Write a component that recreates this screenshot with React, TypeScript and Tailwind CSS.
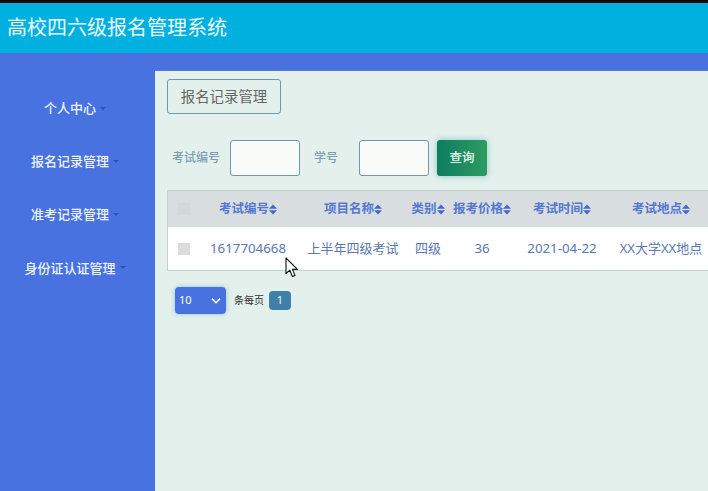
import { ChevronDown } from "lucide-react";

const menus = ["个人中心", "报名记录管理", "准考记录管理", "身份证认证管理"];

const columns = [
  { label: "考试编号", value: "1617704668", width: "w-[96px]", size: "text-[13.3px]" },
  { label: "项目名称", value: "上半年四级考试", width: "w-[114px]", size: "text-[13px]" },
  { label: "类别", value: "四级", width: "w-[36px]", size: "text-[13px]" },
  { label: "报考价格", value: "36", width: "w-[72px]", size: "text-[13.3px]" },
  { label: "考试时间", value: "2021-04-22", width: "w-[88px]", size: "text-[13.3px]" },
  { label: "考试地点", value: "XX大学XX地点", width: "w-[110px]", size: "text-[13px]" },
];

const fontStack = "font-['Noto_Sans','Noto_Sans_CJK_SC',sans-serif]";

const SortIcon = () => (
  <svg width="8" height="11" viewBox="0 0 8 11" className="shrink-0 text-[#4468c8]" fill="currentColor">
    <path d="M4 0.5 8 4.8H0Z" />
    <path d="M4 10.5 0 6.2H8Z" />
  </svg>
);

const App = () => {
  return (
    <div className={`relative flex h-[491px] w-[708px] flex-col overflow-hidden bg-[#4872e0] ${fontStack}`}>
      <div className="h-[3px] bg-[#0b0b0b]" />
      <header className="flex h-[50px] items-center bg-[#00b1e0] pl-[7px] text-[20px] text-[#eefaff]">
        高校四六级报名管理系统
      </header>

      <div className="flex flex-1">
        <aside className="w-[155px] pr-[5px] pt-[45.5px]">
          <ul className="flex flex-col gap-[33.3px]">
            {menus.map((menu) => (
              <li key={menu} className="flex h-[20px] items-center justify-center gap-[4px] text-[13px] font-medium text-[#eef3ff]">
                {menu}
                <span className="mb-[1px] h-0 w-0 shrink-0 border-x-[3.5px] border-t-[3.5px] border-x-transparent border-t-[#3050b0]" />
              </li>
            ))}
          </ul>
        </aside>

        <main className="mt-[17px] flex-1 overflow-hidden border-t border-[#5a78c8] bg-[#e4f0eb] pl-[12px] pt-[8px]">
          <button className="h-[35px] w-[114px] rounded-[3px] border border-[#6f97ad] text-[14.4px] text-[#666]">
            报名记录管理
          </button>

          <div className="mt-[26px] flex h-[36px] items-center pl-[5px]">
            <label className="w-[48px] text-[12px] font-medium text-[#7f9fb4]">考试编号</label>
            <input className="ml-[10px] h-[36px] w-[70px] rounded-[3px] border border-[#6f97ad] bg-[#f8fbf8]" />
            <label className="ml-[14px] w-[24px] text-[12px] font-medium text-[#7f9fb4]">学号</label>
            <input className="ml-[21px] h-[36px] w-[70px] rounded-[3px] border border-[#6f97ad] bg-[#f8fbf8]" />
            <button className="ml-[8px] h-[36px] w-[50px] rounded-[3px] bg-gradient-to-r from-[#0b7d60] to-[#2c9c62] text-[12.5px] font-medium text-[#eef8f2] shadow-[0_0_6px_rgba(30,140,170,0.45)]">
              查询
            </button>
          </div>

          <div className="mt-[14px] w-[560px] border border-[#c8cfcf] bg-white">
            <div className="flex h-[36px] items-center bg-[#d8dde0]">
              <div className="flex w-[32px] justify-center">
                <span className="h-[12px] w-[12px] bg-[#d3d8da]" />
              </div>
              {columns.map((col) => (
                <div
                  key={col.label}
                  className={`flex items-center justify-center text-[12.5px] font-bold text-[#5578d0] ${col.width}`}
                >
                  {col.label}
                  <SortIcon />
                </div>
              ))}
            </div>
            <div className="flex h-[43px] items-center">
              <div className="flex w-[32px] justify-center">
                <span className="h-[12px] w-[12px] bg-[#dcdcdc]" />
              </div>
              {columns.map((col) => (
                <div
                  key={col.label}
                  className={`whitespace-nowrap text-center text-[#5a78b4] ${col.size} ${col.width}`}
                >
                  {col.value}
                </div>
              ))}
            </div>
          </div>

          <div className="mt-[16px] flex items-center pl-[8px]">
            <div className="flex h-[27px] w-[51px] items-center justify-between rounded-[4px] bg-[#4872e0] pl-[4px] pr-[3px] text-[11px] text-white shadow-[0_0_5px_rgba(70,160,230,0.5)]">
              10
              <ChevronDown size={14} strokeWidth={3} />
            </div>
            <span className="ml-[8px] w-[31px] whitespace-nowrap text-[10px] text-[#333]">条每页</span>
            <span className="ml-[4px] flex h-[19px] w-[22px] items-center justify-center rounded-[4px] bg-[#4080a8] text-[11px] text-[#e8f4fa]">
              1
            </span>
          </div>
        </main>
      </div>

      {/* mouse pointer caught in the screenshot */}
      <svg width="15" height="21" viewBox="0 0 15 21" className="absolute left-[285px] top-[257px]">
        <path
          d="M1 1V16.5L4.8 13.2L7.4 19.5L10 18.4L7.4 12.4H12.5Z"
          fill="#fff"
          stroke="#111"
          strokeWidth="1.1"
          strokeLinejoin="round"
        />
      </svg>
    </div>
  );
};

export default App;
